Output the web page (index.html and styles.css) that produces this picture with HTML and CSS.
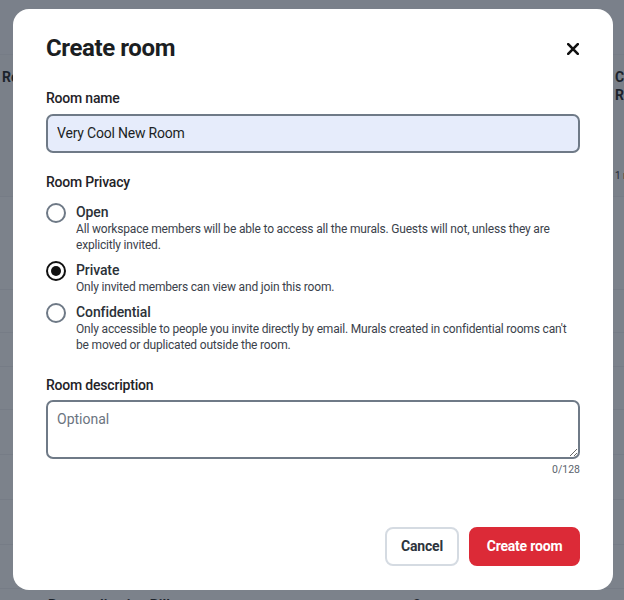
FILE: index.html
```html
<!DOCTYPE html>
<html lang="en">
<head>
<meta charset="utf-8">
<title>Create room</title>
<link rel="stylesheet" href="styles.css">
</head>
<body>
<div class="page">
  <div class="row row-top"></div>
  <div class="row row-head">
    <div class="cell c1 head">Rooms</div>
    <div class="cell c2"></div>
    <div class="cell c3"></div>
    <div class="cell c4"><div class="head">Created<br>Rooms</div><div class="small">1 room</div></div>
  </div>
  <div class="row h93"></div>
  <div class="row h43"></div>
  <div class="row h34"></div>
  <div class="row h43"></div>
  <div class="row h45"></div>
  <div class="row h45"></div>
  <div class="row h45"></div>
  <div class="row h44"></div>
  <div class="row row-last">
    <div class="cell c1"></div>
    <div class="cell c2 head">Personalization Pill</div>
    <div class="cell c3 head">2</div>
  </div>
</div>

<div class="overlay">
  <div class="modal" role="dialog" aria-labelledby="title">
    <div class="modal-header">
      <h1 id="title" class="title">Create room</h1>
      <button class="close" aria-label="Close">
        <svg width="12" height="12" viewBox="0 0 12 12"><path d="M1.2 1.2 L10.8 10.8 M10.8 1.2 L1.2 10.8" stroke="#111" stroke-width="2.6" stroke-linecap="round"/></svg>
      </button>
    </div>

    <label class="field-label" for="name">Room name</label>
    <input id="name" class="input" type="text" value="Very Cool New Room">

    <div class="field-label privacy-label">Room Privacy</div>
    <div class="options">
      <div class="option">
        <span class="radio"></span>
        <div class="option-text">
          <div class="option-title">Open</div>
          <div class="option-desc">All workspace members will be able to access all the murals. Guests will not, unless they are explicitly invited.</div>
        </div>
      </div>
      <div class="option">
        <span class="radio checked"><span class="dot"></span></span>
        <div class="option-text">
          <div class="option-title">Private</div>
          <div class="option-desc">Only invited members can view and join this room.</div>
        </div>
      </div>
      <div class="option">
        <span class="radio"></span>
        <div class="option-text">
          <div class="option-title">Confidential</div>
          <div class="option-desc">Only accessible to people you invite directly by email. Murals created in confidential rooms can't be moved or duplicated outside the room.</div>
        </div>
      </div>
    </div>

    <label class="field-label desc-label" for="desc">Room description</label>
    <textarea id="desc" class="textarea" placeholder="Optional"></textarea>
    <div class="counter">0/128</div>

    <div class="footer">
      <button class="btn btn-secondary">Cancel</button>
      <button class="btn btn-primary">Create room</button>
    </div>
  </div>
</div>
</body>
</html>
```

FILE: styles.css
```css
* { box-sizing: border-box; }
html, body { margin: 0; padding: 0; }
body {
  width: 624px;
  height: 600px;
  overflow: hidden;
  background: #ffffff;
  font-family: Roboto, "Liberation Sans", Arial, sans-serif;
  color: #1f2328;
}

/* background page */
.page { width: 624px; }
.row { border-bottom: 1px solid #f0f1f3; display: flex; }
.row-top { height: 55px; background: #fbfbfc; }
.row-head { height: 142px; background: #fafafb; }
.h93 { height: 93px; }
.h43 { height: 43px; }
.h34 { height: 34px; }
.h45 { height: 45px; }
.h44 { height: 44px; }
.row-last { height: 40px; padding-top: 7px; }
.cell { font-size: 14px; white-space: nowrap; }
.c1 { flex: none; width: 48px; padding-left: 2px; }
.c2 { flex: none; width: 365px; }
.c3 { flex: none; width: 202px; }
.c4 { flex: 1; min-width: 0; }
.head { font-weight: 700; color: #111; line-height: 18px; }
.row-head .c1 { padding-top: 13px; }
.row-head .c4 { padding-top: 13px; }
.small { font-size: 10px; margin-top: 66px; color: #222; }

/* overlay + modal */
.overlay {
  position: fixed;
  inset: 0;
  background: rgba(36, 47, 61, 0.6);
  display: flex;
  align-items: center;
  justify-content: center;
}
.modal {
  width: 600px;
  height: 581px;
  margin-top: -2px;
  margin-left: 2px;
  background: #ffffff;
  border-radius: 16px;
  padding: 23px 33px 24px 33px;
  display: flex;
  flex-direction: column;
}
.modal-header {
  display: flex;
  align-items: center;
  justify-content: space-between;
  height: 32px;
}
.title {
  margin: 0;
  font-size: 24px;
  line-height: 32px;
  font-weight: 700;
  letter-spacing: -0.4px;
  color: #1b1e22;
}
.close {
  border: 0;
  background: none;
  padding: 0;
  width: 12px;
  height: 12px;
  margin-right: 1px;
  margin-top: 3px;
  display: flex;
}

.field-label {
  display: block;
  font-size: 14px;
  line-height: 20px;
  font-weight: 500;
  color: #1f2328;
  margin-top: 24px;
  letter-spacing: -0.2px;
}
.input {
  margin-top: 6px;
  width: 100%;
  height: 39px;
  border: 2px solid #6f7a87;
  border-radius: 7px;
  background: #e6ecfb;
  padding: 0 9px;
  font-family: inherit;
  font-size: 14px;
  letter-spacing: -0.2px;
  color: #1c1f24;
  outline: none;
}
.privacy-label { margin-top: 19px; }

.options {
  margin-top: 11px;
  display: flex;
  flex-direction: column;
  gap: 8px;
}
.option { display: flex; align-items: flex-start; gap: 10px; }
.radio {
  flex: none;
  width: 20px;
  height: 20px;
  border: 2px solid #6e7986;
  border-radius: 50%;
  display: flex;
  align-items: center;
  justify-content: center;
}
.radio.checked { border: 2.5px solid #111; }
.dot { width: 10px; height: 10px; border-radius: 50%; background: #111; }
.option-text { flex: 1; }
.option-title {
  font-size: 14px;
  line-height: 18px;
  font-weight: 500;
  color: #2b3138;
  letter-spacing: -0.1px;
}
.option-desc {
  font-size: 12px;
  line-height: 16px;
  color: #3b424b;
  letter-spacing: -0.18px;
}

.desc-label { margin-top: 22px; }
.textarea {
  margin-top: 5px;
  width: 100%;
  height: 59px;
  border: 2px solid #6f7a87;
  border-radius: 7px;
  padding: 7px 9px;
  font-family: inherit;
  font-size: 14px;
  line-height: 20px;
  color: #1c1f24;
  resize: vertical;
  outline: none;
  display: block;
}
.textarea::placeholder { color: #6b7480; }
.counter {
  margin-top: 4px;
  text-align: right;
  font-size: 10.5px;
  line-height: 14px;
  color: #5b636d;
}

.footer {
  margin-top: auto;
  display: flex;
  justify-content: flex-end;
  gap: 10px;
}
.btn {
  height: 39px;
  border-radius: 8px;
  padding: 0 14px;
  font-family: inherit;
  font-size: 14px;
  font-weight: 700;
  letter-spacing: -0.2px;
  cursor: pointer;
}
.btn-secondary {
  width: 74px;
  background: #fff;
  border: 2px solid #d5dbe2;
  color: #2d343c;
}
.btn-primary {
  width: 111px;
  background: #dc2a37;
  border: 2px solid #dc2a37;
  color: #fff;
}
```
